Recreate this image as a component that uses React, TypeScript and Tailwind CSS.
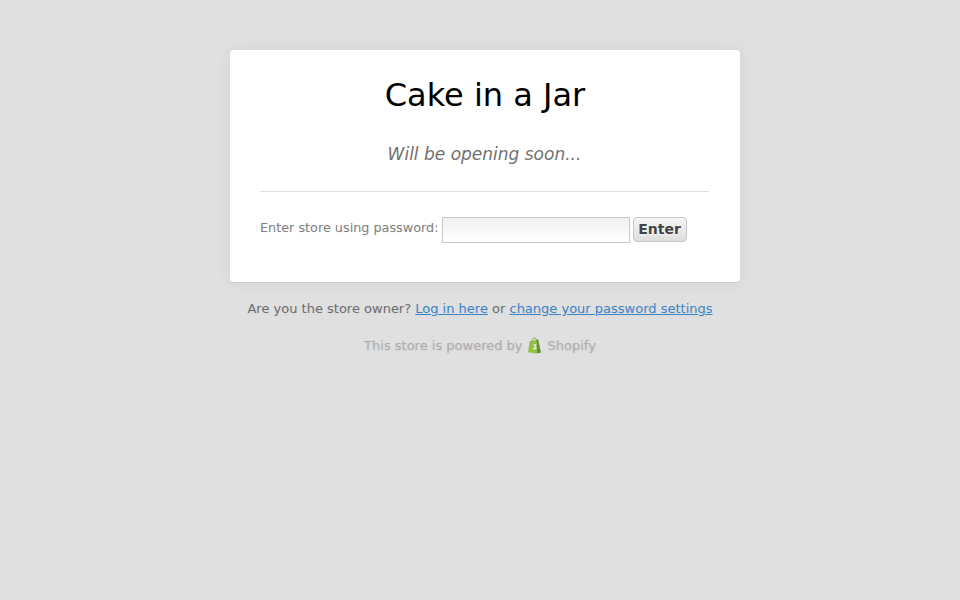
function ShopifyBag() {
  return (
    <svg width="16" height="17" viewBox="0 0 16 17" className="mx-[4px] -translate-y-px">
      <path d="M2.5 4.6 11 2.400 13.900 15.400 8.600 16.600 1 15.200Z" fill="#95bf47" />
      <path d="M11 2.400 13.900 15.400 10.200 16.200 9.600 3Z" fill="#5e8e3e" />
      <path d="M5 5c0-2 1-4 2.400-4S9.600 2.300 9.600 4" fill="none" stroke="#7ba83a" strokeWidth="1" />
      <path d="M9.500 7.300c-.5-.3-1-.4-1.500-.3-1.300.2-1.700 1.900-.6 2.500.9.500 1.300.9 1 1.500-.3.700-1.300.6-2.300 0l-.3 1.100c1 .6 2.800.7 3.500-.5.700-1.300-.1-2.200-1.100-2.800-.6-.4-.6-.9-.2-1 .4-.2.900 0 1.300.1Z" fill="#fff" />
    </svg>
  );
}

export default function App() {
  return (
    <div className="min-h-[600px] bg-[#e0e0e0] pt-[50px] font-['DejaVu_Sans',sans-serif] text-[13px]">
      <div className="mx-auto w-[500px]">
        {/* card */}
        <div className="h-[233px] w-[510px] rounded-[4px] border-b border-[#c9c9c9] bg-white pl-[30px] pr-[31px] shadow-[0_0_18px_rgba(0,0,0,0.06)]">
          <h1 className="pl-[1px] pt-[21px] text-center text-[32px] leading-[48px] text-black">Cake in a Jar</h1>
          <p className="mt-[23px] text-center text-[17px] italic leading-[24px] text-[#707070]">Will be opening soon...</p>
          <div className="mt-[25px] h-px bg-[#dedede]" />
          <div className="mt-[25px] flex items-start">
            <label className="mt-[2px] text-[12.8px] leading-[18px] text-[#808080] [text-shadow:0_1px_3px_rgba(0,0,0,0.05)]">Enter store using password:</label>
            <input
              type="password"
              className="ml-[3px] h-[26px] w-[188px] border border-[#c8c8c8] bg-gradient-to-b from-[#f0f0f0] to-white"
            />
            <button className="ml-[3px] h-[25px] w-[54px] rounded-[4px] border border-[#c6c6c6] bg-gradient-to-b from-[#f5f5f5] to-[#dedede] text-[14px] font-bold text-[#444] [text-shadow:0_1px_3px_rgba(255,255,255,0.8)]">
              Enter
            </button>
          </div>
        </div>
      </div>
      <p className="mt-[17px] text-center leading-[18px] text-[#6e6e6e] [text-shadow:0_1px_3px_rgba(0,0,0,0.06)]">
        Are you the store owner?{" "}
        <a href="#" className="text-[#3a86c8] underline">Log in here</a> or{" "}
        <a href="#" className="text-[#3a86c8] underline">change your password settings</a>
      </p>
      <div className="mt-[19px] flex items-center justify-center leading-[18px] text-[#adadad] [text-shadow:0_1px_3px_rgba(0,0,0,0.08)]">
        <span>This store is powered by</span>
        <ShopifyBag />
        <span className="ml-[1px]">Shopify</span>
      </div>
    </div>
  );
}
